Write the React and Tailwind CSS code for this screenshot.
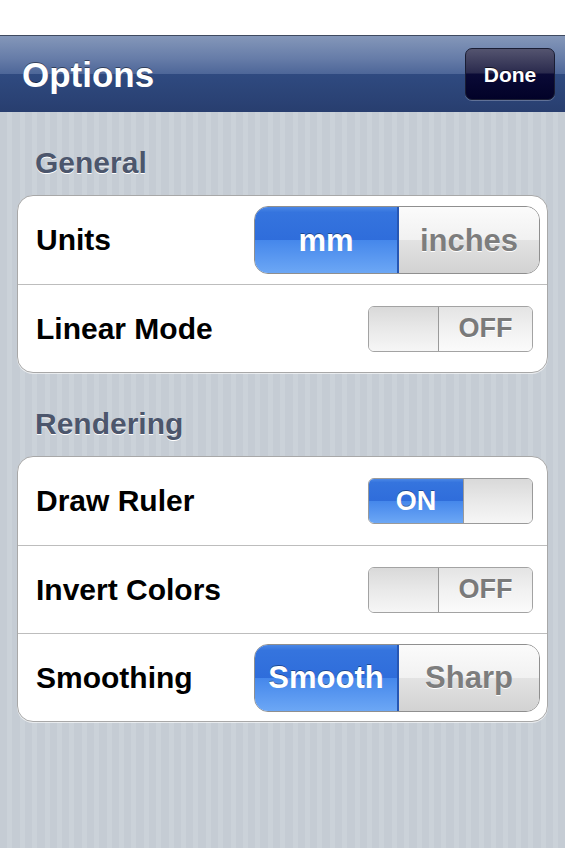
import React from "react";

const blue =
  "bg-[linear-gradient(to_bottom,#4a87e6_0%,#3574de_8%,#2f6ddb_50%,#4587eb_50%,#6ca7f5_100%)]";
const gray =
  "bg-[linear-gradient(to_bottom,#fbfbfb_0%,#f1f1f1_50%,#e3e3e3_50%,#d2d2d2_100%)]";

function Segmented({ left, right }) {
  return (
    <div className="flex h-[68px] w-[286px] overflow-hidden rounded-[14px] border border-[#8f8f8f]">
      <div
        className={`flex w-[144px] items-center justify-center border-r-2 border-[#2757b3] ${blue} text-[31px] font-bold leading-none text-white [text-shadow:0_-1px_0_rgba(0,0,0,0.35)]`}
      >
        {left}
      </div>
      <div
        className={`flex flex-1 items-center justify-center ${gray} text-[31px] font-bold leading-none text-[#7d7d7d] [text-shadow:0_1px_0_#ffffff]`}
      >
        {right}
      </div>
    </div>
  );
}

function Switch({ on }) {
  const knob = (
    <div className="h-full w-[70px] bg-[linear-gradient(to_bottom,#d9d9d9_0%,#e9e9e9_50%,#f6f6f6_100%)]" />
  );
  if (on) {
    return (
      <div className="flex h-[46px] w-[165px] overflow-hidden rounded-[6px] border border-[#9a9a9a]">
        <div
          className={`flex w-[95px] items-center justify-center ${blue} text-[27px] font-bold leading-none text-white [text-shadow:0_-1px_0_rgba(0,0,0,0.35)]`}
        >
          ON
        </div>
        <div className="h-full w-[70px] border-l border-[#9a9a9a] bg-[linear-gradient(to_bottom,#d9d9d9_0%,#e9e9e9_50%,#f6f6f6_100%)]" />
      </div>
    );
  }
  return (
    <div className="flex h-[46px] w-[165px] overflow-hidden rounded-[6px] border border-[#a3a3a3]">
      <div className="h-full w-[70px] border-r border-[#9a9a9a] bg-[linear-gradient(to_bottom,#d9d9d9_0%,#e9e9e9_50%,#f6f6f6_100%)]" />
      <div className="flex flex-1 items-center justify-center bg-[linear-gradient(to_bottom,#e4e4e4_0%,#f1f1f1_50%,#fbfbfb_100%)] text-[27px] font-bold leading-none text-[#7a7a7a] [text-shadow:0_1px_0_#ffffff]">
        OFF
      </div>
    </div>
  );
}

function Row({ label, children, first, seg }) {
  return (
    <div
      className={`flex h-[88px] items-center justify-between pl-[18px] ${
        seg ? "pr-[7px]" : "pr-[14px]"
      } ${first ? "" : "border-t border-[#bdbdbd]"}`}
    >
      <span className="text-[30px] font-bold leading-none text-black">{label}</span>
      {children}
    </div>
  );
}

function Header({ children, className = "" }) {
  return (
    <div
      className={`pl-[18px] text-[30px] font-bold leading-[36px] text-[#4c566c] [text-shadow:0_1px_0_#ffffff] ${className}`}
    >
      {children}
    </div>
  );
}

function Card({ children }) {
  return (
    <div className="mt-[14px] overflow-hidden rounded-[16px] border border-[#a8a8a8] bg-white shadow-[0_1px_0_rgba(255,255,255,0.6)]">
      {children}
    </div>
  );
}

export default function App() {
  return (
    <div className="flex h-[848px] w-[565px] flex-col overflow-hidden font-['Liberation_Sans',Arial,sans-serif]">
      <div className="h-[35px] shrink-0 bg-white" />
      <div className="flex h-[77px] shrink-0 items-center justify-between border-t border-[#3f4a60] bg-[linear-gradient(to_bottom,#8497b9_0%,#667ca8_30%,#4d6698_50%,#2f4a80_50%,#2b4376_80%,#283e6f_100%)] pl-[22px] pr-[10px]">
        <span className="text-[35px] font-bold leading-none text-white [text-shadow:0_-1px_0_rgba(0,0,0,0.45)]">
          Options
        </span>
        <div className="flex h-[52px] w-[90px] items-center justify-center rounded-[7px] border border-[#1a1d33] bg-[linear-gradient(to_bottom,#54546f_0%,#2a2a4d_48%,#0a0a36_50%,#020228_100%)] text-[21px] font-bold leading-none text-white shadow-[0_1px_0_rgba(255,255,255,0.25)] [text-shadow:0_-1px_0_rgba(0,0,0,0.6)]">
          Done
        </div>
      </div>
      <div className="flex-1 bg-[repeating-linear-gradient(90deg,#c5ccd4_0px,#c5ccd4_7.5px,#cbd2d9_7.5px,#cbd2d9_12.4px)] px-[17px] pt-[33px]">
        <Header>General</Header>
        <Card>
          <Row label="Units" first seg>
            <Segmented left="mm" right="inches" />
          </Row>
          <Row label="Linear Mode">
            <Switch on={false} />
          </Row>
        </Card>
        <Header className="mt-[33px]">Rendering</Header>
        <Card>
          <Row label="Draw Ruler" first>
            <Switch on />
          </Row>
          <Row label="Invert Colors">
            <Switch on={false} />
          </Row>
          <Row label="Smoothing" seg>
            <Segmented left="Smooth" right="Sharp" />
          </Row>
        </Card>
      </div>
    </div>
  );
}
